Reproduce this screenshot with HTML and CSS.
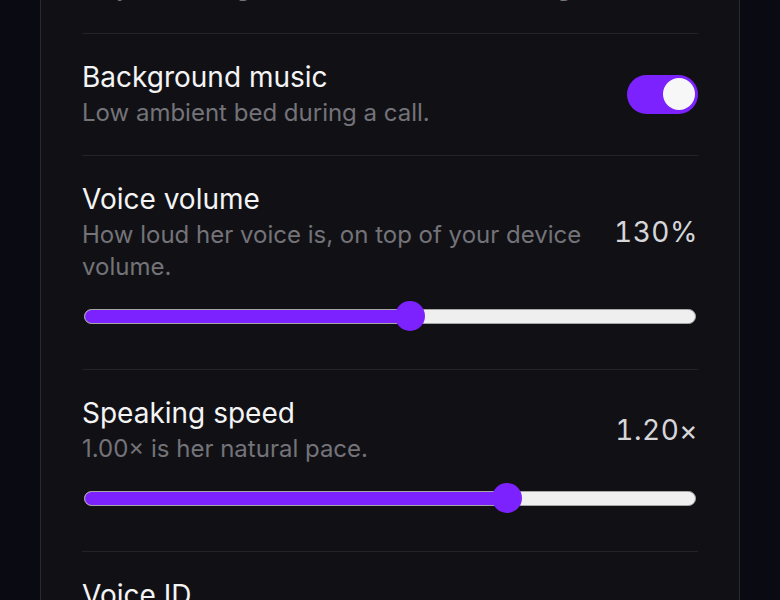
FILE: index.html
```html
<!DOCTYPE html>
<html lang="en">
<head>
<meta charset="utf-8">
<title>Voice settings</title>
<link rel="stylesheet" href="styles.css">
</head>
<body>
<main class="panel">
  <section class="row cut">
    <div class="row-head">
      <div class="text">
        <div class="title">Ringtone</div>
        <div class="desc">Play a soft ring tone while she’s connecting.</div>
      </div>
    </div>
  </section>
  <section class="row">
    <div class="row-head">
      <div class="text">
        <div class="title">Background music</div>
        <div class="desc">Low ambient bed during a call.</div>
      </div>
      <div class="toggle on"><span class="knob"></span></div>
    </div>
  </section>
  <section class="row">
    <div class="row-head">
      <div class="text">
        <div class="title">Voice volume</div>
        <div class="desc">How loud her voice is, on top of your device volume.</div>
      </div>
      <div class="value">130%</div>
    </div>
    <div class="slider">
      <div class="track"><div class="fill" style="width: 326px"></div></div>
      <div class="thumb" style="left: 311px"></div>
    </div>
  </section>
  <section class="row">
    <div class="row-head">
      <div class="text">
        <div class="title">Speaking speed</div>
        <div class="desc">1.00× is her natural pace.</div>
      </div>
      <div class="value">1.20×</div>
    </div>
    <div class="slider">
      <div class="track"><div class="fill" style="width: 423px"></div></div>
      <div class="thumb" style="left: 408px"></div>
    </div>
  </section>
  <section class="row last">
    <div class="row-head">
      <div class="text">
        <div class="title">Voice ID</div>
        <div class="desc">The voice she speaks with.</div>
      </div>
    </div>
  </section>
</main>
</body>
</html>
```

FILE: styles.css
```css
html, body {
  margin: 0;
  padding: 0;
  background: #0a0a13;
  height: 100%;
  overflow: hidden;
}

body {
  font-family: "Inter", "Noto Sans", sans-serif;
}

.panel {
  box-sizing: border-box;
  width: 700px;
  margin: -92px auto 0;
  background: #111115;
  border: 1px solid #2a2a30;
  padding: 0 41px;
  min-height: 800px;
}

.row {
  padding: 25px 0 26px;
  border-bottom: 1px solid #232328;
}

.row.cut {
  padding-bottom: 29px;
}

.row-head {
  display: flex;
  align-items: center;
  justify-content: space-between;
  gap: 24px;
}

.text {
  flex: 1;
  min-width: 0;
}

.title {
  font-size: 28px;
  line-height: 36px;
  color: #f4f4f5;
}

.desc {
  margin-top: 2px;
  font-size: 24px;
  line-height: 32px;
  color: #737379;
}

.value {
  font-size: 28px;
  line-height: 32px;
  color: #d6d6da;
  letter-spacing: 0.5px;
  font-variant-numeric: tabular-nums;
}

.toggle {
  position: relative;
  flex: none;
  width: 71px;
  height: 39px;
  border-radius: 20px;
  background: #3a3a42;
}

.toggle.on {
  background: #7b22fe;
}

.knob {
  position: absolute;
  top: 3.5px;
  left: 3px;
  width: 32px;
  height: 32px;
  border-radius: 50%;
  background: #f7f7f8;
}

.toggle.on .knob {
  left: auto;
  right: 3px;
}

.slider {
  position: relative;
  height: 30px;
  margin: 18px 2px 12px;
  display: flex;
  align-items: center;
}

.track {
  box-sizing: border-box;
  width: 100%;
  height: 15px;
  border-radius: 8px;
  background: #efefef;
  border: 1px solid #a6a6a6;
  overflow: hidden;
  position: relative;
}

.fill {
  box-sizing: border-box;
  position: absolute;
  left: -1px;
  top: -1px;
  bottom: -1px;
  border-radius: 8px 0 0 8px;
  background: #7c22fe;
  border: 1px solid #8a52d8;
  border-right: none;
}

.thumb {
  position: absolute;
  top: 0;
  width: 30px;
  height: 30px;
  border-radius: 50%;
  background: #7c22fe;
}
```
